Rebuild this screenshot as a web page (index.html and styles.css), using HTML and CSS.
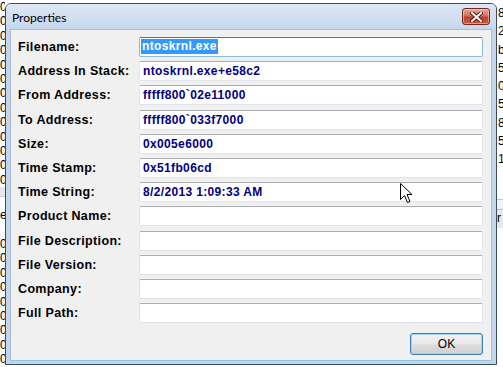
FILE: index.html
```html
<!DOCTYPE html>
<html lang="en">
<head>
    <meta charset="UTF-8">
    <title>Properties</title>
    <link rel="stylesheet" href="styles.css">
</head>
<body>

    <div class="desk">
        <!-- bits of the list behind the dialog -->
        <div class="behind-left">
            <div class="cell">0</div><div class="cell">0</div><div class="cell">0</div>
            <div class="cell">0</div><div class="cell">0</div><div class="cell">0</div>
            <div class="cell">0</div><div class="cell">0</div><div class="cell">0</div>
            <div class="cell">0</div><div class="cell">0</div><div class="cell">0</div>
            <div class="cell">0</div>
            <div class="band"></div>
            <div class="band-text">e</div>
            <div class="cell">0</div><div class="cell">0</div><div class="cell">0</div>
            <div class="cell">0</div><div class="cell">0</div><div class="cell">0</div>
            <div class="cell">0</div><div class="cell">0</div><div class="cell">0</div>
        </div>

        <!-- Dialog -->
        <div class="window">
            <div class="titlebar">
                <span class="title">Properties</span>
                <button class="close" aria-label="Close">
                    <svg width="13" height="10" viewBox="0 0 13 10">
                        <path d="M2 1 L11 9 M11 1 L2 9" stroke="#5a1a12" stroke-width="4" stroke-linecap="square"/>
                        <path d="M2 1 L11 9 M11 1 L2 9" stroke="#ffffff" stroke-width="2" stroke-linecap="square"/>
                    </svg>
                </button>
            </div>

            <div class="client">
                <div class="form">
                    <span class="label">Filename:</span>
                    <div class="field focused"><span class="selected">ntoskrnl.exe</span></div>

                    <span class="label">Address In Stack:</span>
                    <div class="field">ntoskrnl.exe+e58c2</div>

                    <span class="label">From Address:</span>
                    <div class="field">fffff800`02e11000</div>

                    <span class="label">To Address:</span>
                    <div class="field">fffff800`033f7000</div>

                    <span class="label">Size:</span>
                    <div class="field">0x005e6000</div>

                    <span class="label">Time Stamp:</span>
                    <div class="field">0x51fb06cd</div>

                    <span class="label">Time String:</span>
                    <div class="field">8/2/2013 1:09:33 AM</div>

                    <span class="label">Product Name:</span>
                    <div class="field"></div>

                    <span class="label">File Description:</span>
                    <div class="field"></div>

                    <span class="label">File Version:</span>
                    <div class="field"></div>

                    <span class="label">Company:</span>
                    <div class="field"></div>

                    <span class="label">Full Path:</span>
                    <div class="field"></div>
                </div>

                <div class="actions">
                    <button class="ok">OK</button>
                </div>
            </div>
        </div>

        <div class="behind-right">
            <div class="cell">8</div><div class="cell">2</div><div class="cell">b</div>
            <div class="cell">5</div><div class="cell">0</div><div class="cell">5</div>
            <div class="cell">8</div><div class="cell">5</div><div class="cell">1</div>
            <div class="cell"></div>
            <div class="band"></div>
            <div class="band-text">r</div>
        </div>
    </div>

    <!-- mouse pointer -->
    <svg class="pointer" width="13" height="21" viewBox="0 0 13 21">
        <path d="M0.5 0.5 L0.5 16.5 L4.5 12.5 L7.5 19.5 L10 18.5 L7 11.5 L12 11.5 Z" fill="#ffffff" stroke="#000000" stroke-width="1"/>
    </svg>

</body>
</html>
```

FILE: styles.css
```css
/* Basic styles */
body {
    margin: 0;
    padding: 0;
    background-color: #ffffff;
    font-family: 'Liberation Sans', Arial, sans-serif;
    overflow: hidden;
}

.desk {
    display: flex;
    align-items: flex-start;
    height: 367px;
}

/* List columns peeking out behind the dialog */
.behind-left {
    width: 5px;
    overflow: hidden;
    text-align: right;
    font-size: 12px;
    color: #000;
}

.behind-left .cell {
    height: 14.4px;
    line-height: 14.4px;
    padding-right: 1px;
}

.behind-left .band {
    height: 9px;
    background-color: #e6e6e6;
    border-bottom: 1px solid #c8c8c8;
}

.behind-left .band-text {
    height: 40px;
    line-height: 36px;
}

.behind-right {
    width: 6px;
    overflow: hidden;
    font-size: 12px;
    color: #000;
    padding-top: 4px;
}

.behind-right .cell {
    height: 18.3px;
    line-height: 18.3px;
    padding-left: 1px;
}

.behind-right .band {
    height: 9px;
    margin-top: 12px;
    border-top: 1px solid #c8c8c8;
    background-color: #f2f2f2;
}

.behind-right .band-text {
    height: 18px;
    line-height: 16px;
    background-color: #e8e8e8;
    border-top: 1px solid #bfbfbf;
}

/* Dialog frame */
.window {
    width: 492px;
    height: 362px;
    margin-top: 3px;
    box-sizing: border-box;
    border: 1px solid #3c4a5c;
    border-radius: 6px 6px 0 0;
    background-color: #c3d5ec;
    display: flex;
    flex-direction: column;
}

.titlebar {
    height: 25px;
    display: flex;
    justify-content: space-between;
    align-items: flex-start;
    padding: 0 6px;
    background: linear-gradient(#dce7f5, #c7d8ee);
    border-radius: 5px 5px 0 0;
}

.title {
    font-family: Lato, 'Noto Sans', sans-serif;
    font-size: 12px;
    line-height: 27px;
    color: #000;
}

.close {
    margin-top: 4px;
    width: 28px;
    height: 17px;
    padding: 0;
    border: 1px solid #6e2a22;
    border-radius: 3px;
    background: linear-gradient(#e9a99b, #d0705f 45%, #c1432f 55%, #cb5a3e);
    box-shadow: inset 0 0 0 1px rgba(255, 220, 210, 0.5);
    display: flex;
    align-items: center;
    justify-content: center;
}

.client {
    flex: 1;
    margin: 0 4px 3px 4px;
    background-color: #f0f0f0;
    border: 1px solid #a9bdd6;
    border-bottom-color: #8ec6ea;
    padding: 7px 8px 4px 7px;
    display: flex;
    flex-direction: column;
}

/* Form rows */
.form {
    display: grid;
    grid-template-columns: 121px 1fr;
    row-gap: 4.2px;
}

.label {
    font-size: 12.5px;
    font-weight: bold;
    color: #000;
    line-height: 20px;
    letter-spacing: 0.35px;
}

.field {
    height: 20px;
    box-sizing: border-box;
    background-color: #fff;
    border: 1px solid #e0e3e9;
    border-top-color: #abadb3;
    border-radius: 2px;
    padding-left: 3px;
    font-size: 12px;
    font-weight: bold;
    letter-spacing: 0.35px;
    line-height: 18px;
    color: #000080;
    white-space: nowrap;
    overflow: hidden;
}

.field.focused {
    border-color: #8cbbe8;
    border-top-color: #3d7bad;
    padding-left: 1px;
}

.selected {
    display: inline-block;
    background-color: #3399ff;
    color: #fff;
    line-height: 15px;
    padding: 0 1px;
    margin-top: 1px;
    vertical-align: top;
}

.actions {
    display: flex;
    justify-content: flex-end;
    margin-top: 10px;
}

.ok {
    width: 73px;
    height: 22px;
    border: 1px solid #3c7fb1;
    border-radius: 3px;
    background: linear-gradient(#f2f2f2, #ebebeb 45%, #dddddd 55%, #cfcfcf);
    box-shadow: inset 0 0 0 1px #9fd5f5;
    font-family: 'Liberation Sans', Arial, sans-serif;
    font-size: 12px;
    color: #000;
    padding: 0;
}

.pointer {
    position: absolute;
    left: 400px;
    top: 183px;
}
```
